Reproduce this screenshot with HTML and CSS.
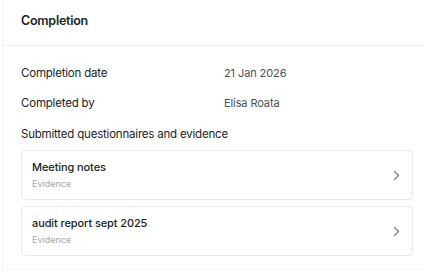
FILE: index.html
```html
<!DOCTYPE html>
<html lang="en">
  <head>
    <meta charset="UTF-8" />
    <meta name="viewport" content="width=device-width, initial-scale=1.0" />
    <title>Completion</title>
    <link rel="stylesheet" href="styles.css">
  </head>
  <body>
    <div class="panel">
      <div class="panel-head">
        <h2>Completion</h2>
      </div>
      <div class="panel-body">
        <div class="row">
          <span class="label">Completion date</span>
          <span class="value">21 Jan 2026</span>
        </div>
        <div class="row">
          <span class="label">Completed by</span>
          <span class="value">Elisa Roata</span>
        </div>
        <p class="section-title">Submitted questionnaires and evidence</p>
        <div class="cards">
          <div class="card">
            <div class="card-text">
              <div class="card-title">Meeting notes</div>
              <div class="card-sub">Evidence</div>
            </div>
            <svg class="chevron" width="7" height="11" viewBox="0 0 7 11"><path d="M1.5 1.5l4 4-4 4" fill="none" stroke="#6b7280" stroke-width="1.1" stroke-linecap="round" stroke-linejoin="round"/></svg>
          </div>
          <div class="card">
            <div class="card-text">
              <div class="card-title">audit report sept 2025</div>
              <div class="card-sub">Evidence</div>
            </div>
            <svg class="chevron" width="7" height="11" viewBox="0 0 7 11"><path d="M1.5 1.5l4 4-4 4" fill="none" stroke="#6b7280" stroke-width="1.1" stroke-linecap="round" stroke-linejoin="round"/></svg>
          </div>
        </div>
      </div>
    </div>
  </body>
</html>
```

FILE: styles.css
```css
* {
  margin: 0;
  padding: 0;
  box-sizing: border-box;
}
html,
body {
  width: 424px;
  height: 277px;
  background-color: #fff;
  font-family: Inter, "Liberation Sans", sans-serif;
  color: #202226;
  overflow: hidden;
}
.panel {
  margin-left: 2px;
  width: 422px;
  height: 270px;
  border-left: 1px solid #f3f4f6;
  border-bottom: 1px solid #f3f4f6;
}
.panel-head {
  height: 46px;
  padding: 12px 0 0 18px;
  border-bottom: 1px solid #f1f2f4;
}
.panel-head h2 {
  font-size: 12.5px;
  font-weight: 600;
  letter-spacing: -0.25px;
  line-height: 17px;
}
.panel-body {
  padding: 17px 11px 0 18px;
}
.row {
  display: grid;
  grid-template-columns: 203px 1fr;
  height: 30px;
  font-size: 11.5px;
  letter-spacing: -0.2px;
  line-height: 20px;
}
.value {
  color: #4b5058;
  font-size: 11px;
  letter-spacing: -0.1px;
}
.section-title {
  font-size: 11.5px;
  letter-spacing: -0.2px;
  line-height: 20px;
  margin-top: 1px;
}
.cards {
  display: flex;
  flex-direction: column;
  gap: 6px;
  margin-top: 6px;
}
.card {
  display: flex;
  align-items: center;
  justify-content: space-between;
  height: 50px;
  padding: 0 12px 0 10px;
  border: 1px solid #e9eaec;
  border-radius: 4px;
}
.card-title {
  font-size: 11px;
  font-weight: 500;
  letter-spacing: -0.1px;
  line-height: 15px;
}
.card-sub {
  font-size: 9px;
  color: #a3a6ab;
  line-height: 13px;
  margin-top: 2px;
}
.chevron {
  display: block;
}
```
